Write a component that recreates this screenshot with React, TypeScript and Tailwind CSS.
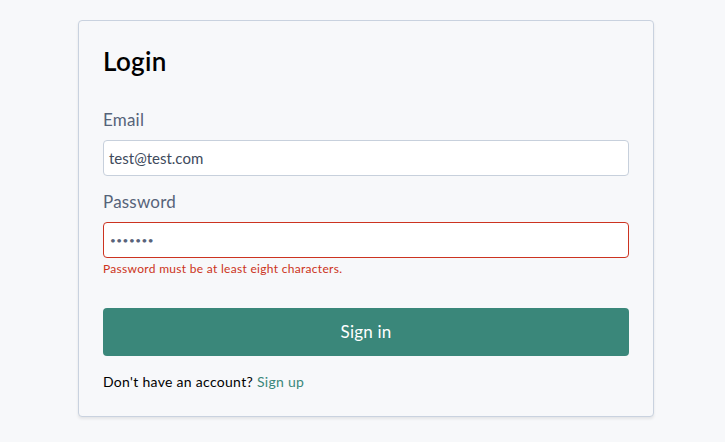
import React from "react";

export default function App() {
  return (
    <div className="min-h-[442px] w-full bg-[#f7f8fa] pt-5" style={{ fontFamily: "Lato, 'Noto Sans', sans-serif" }}>
      <div className="ml-[78px] w-[576px] h-[397px] rounded-[4px] border border-[#c9d2df] bg-[#f7f8fa] shadow-[0_2px_3px_rgba(0,0,0,0.08)] px-6 pt-[23px]">
        <h1 className="text-[26px] font-semibold text-black leading-[34px] tracking-[0.3px]">Login</h1>
        <label className="block mt-[31px] text-[17px] leading-[22px] text-[#566379] tracking-[0.2px]">Email</label>
        <div className="mt-[9px] h-[36px] rounded-[4px] border border-[#c7d0dc] bg-white flex items-center px-[5px] text-[15px] text-[#404a5c]">
          test@test.com
        </div>
        <label className="block mt-[15px] text-[17px] leading-[22px] text-[#566379] tracking-[0.2px]">Password</label>
        <div className="mt-[9px] h-[36px] rounded-[4px] border border-[#cc3320] bg-white flex items-center px-[6px] text-[10px] tracking-[0.5px] text-[#58637a]">
          •••••••
        </div>
        <p className="mt-[3px] text-[12px] leading-[16px] text-[#cc3320] tracking-[0.3px]">Password must be at least eight characters.</p>
        <button className="mt-[31px] w-full h-[48px] rounded-[4px] bg-[#3a877a] text-white text-[17px] tracking-[0.2px]">Sign in</button>
        <p className="mt-[16px] text-[14px] leading-[20px] text-black tracking-[0.3px]">
          Don't have an account? <a className="text-[#3a877a]">Sign up</a>
        </p>
      </div>
    </div>
  );
}
